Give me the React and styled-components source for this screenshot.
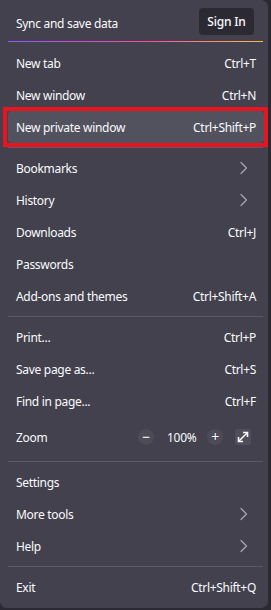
import React from "react";
import styled, { createGlobalStyle } from "styled-components";

const GlobalStyle = createGlobalStyle`
  html, body {
    margin: 0;
    padding: 0;
    background: #2b2a33;
  }
  body {
    font-family: "Noto Sans", "Open Sans", sans-serif;
    -webkit-font-smoothing: antialiased;
  }
`;

const SECTIONS = [
  [
    { label: "New tab", shortcut: "Ctrl+T" },
    { label: "New window", shortcut: "Ctrl+N" },
    { label: "New private window", shortcut: "Ctrl+Shift+P", marked: true },
  ],
  [
    { label: "Bookmarks", sub: true },
    { label: "History", sub: true },
    { label: "Downloads", shortcut: "Ctrl+J" },
    { label: "Passwords" },
    { label: "Add-ons and themes", shortcut: "Ctrl+Shift+A" },
  ],
  [
    { label: "Print...", shortcut: "Ctrl+P" },
    { label: "Save page as...", shortcut: "Ctrl+S" },
    { label: "Find in page...", shortcut: "Ctrl+F" },
    { zoom: true },
  ],
  [
    { label: "Settings" },
    { label: "More tools", sub: true },
    { label: "Help", sub: true },
  ],
  [{ label: "Exit", shortcut: "Ctrl+Shift+Q" }],
];

function Chevron() {
  return (
    <svg width="16" height="16" viewBox="0 0 16 16" fill="none">
      <path
        d="M5 2.5 L10.5 8 L5 13.5"
        stroke="#a9a9b1"
        strokeWidth="1.2"
        strokeLinecap="round"
        strokeLinejoin="round"
      />
    </svg>
  );
}

function ExpandIcon() {
  return (
    <svg width="12" height="12" viewBox="0 0 12 12" fill="none">
      <path d="M2 10 L10 2" stroke="#fbfbfe" strokeWidth="1.6" />
      <path d="M6 1.5 H10.5 V6" stroke="#fbfbfe" strokeWidth="1.6" />
      <path d="M1.5 6 V10.5 H6" stroke="#fbfbfe" strokeWidth="1.6" />
    </svg>
  );
}

function ZoomRow() {
  return (
    <ZoomItem>
      <Label>Zoom</Label>
      <ZoomControls>
        <RoundBtn>−</RoundBtn>
        <ZoomValue>100%</ZoomValue>
        <RoundBtn>+</RoundBtn>
        <SquareBtn>
          <ExpandIcon />
        </SquareBtn>
      </ZoomControls>
    </ZoomItem>
  );
}

export default function App() {
  return (
    <>
      <GlobalStyle />
      <Panel>
        <Header>
          <HeaderTitle>Sync and save data</HeaderTitle>
          <SignIn type="button">Sign In</SignIn>
        </Header>
        <GradientLine />
        {SECTIONS.map((items, i) => (
          <React.Fragment key={i}>
            {i > 0 && <Separator />}
            {items.map((item, j) =>
              item.zoom ? (
                <ZoomRow key={j} />
              ) : (
                <Item key={j} $marked={item.marked}>
                  <Label>{item.label}</Label>
                  {item.shortcut && <Shortcut>{item.shortcut}</Shortcut>}
                  {item.sub && (
                    <ChevronWrap>
                      <Chevron />
                    </ChevronWrap>
                  )}
                </Item>
              )
            )}
          </React.Fragment>
        ))}
      </Panel>
    </>
  );
}

const Panel = styled.div`
  width: 268px;
  height: 608px;
  box-sizing: border-box;
  background: #42414d;
  border-radius: 0 7px 7px 7px;
  padding: 8px 0 4px;
  display: flex;
  flex-direction: column;
  color: #fbfbfe;
  font-size: 12px;
  letter-spacing: -0.3px;
`;

const Header = styled.div`
  display: flex;
  align-items: center;
  justify-content: space-between;
  height: 27px;
  padding: 0 14px 0 16px;
`;

const HeaderTitle = styled.span`
  padding-top: 3px;
`;

const SignIn = styled.button`
  appearance: none;
  border: 0;
  width: 55px;
  height: 27px;
  border-radius: 4px;
  background: #2b2a33;
  color: #fbfbfe;
  font-family: inherit;
  font-size: 12px;
  font-weight: 500;
  letter-spacing: -0.2px;
  padding: 0;
`;

const GradientLine = styled.div`
  height: 1px;
  margin: 6px 5px 5px 8px;
  background: linear-gradient(90deg, #9059ff 0%, #ff4aa2 55%, #ffbd4f 100%);
`;

const Separator = styled.div`
  height: 1px;
  margin: 4px 5px 4px 8px;
  background: #5b5a65;
`;

const Item = styled.div`
  position: relative;
  display: flex;
  align-items: center;
  height: 32px;
  margin: 0 4px 0 8px;
  padding: 0 8px;
  border-radius: 4px;
  background: ${(p) => (p.$marked ? "#52525e" : "transparent")};

  ${(p) =>
    p.$marked &&
    `
    &::after {
      content: "";
      position: absolute;
      top: -4px;
      left: -5px;
      right: -4px;
      bottom: -4px;
      border: 4px solid #e8141f;
    }
  `}
`;

const ZoomItem = styled(Item)`
  height: 40px;
`;

const Label = styled.span`
  flex: 1;
  white-space: nowrap;
`;

const Shortcut = styled.span`
  white-space: nowrap;
`;

const ChevronWrap = styled.span`
  display: flex;
  margin-right: 4px;
`;

const ZoomControls = styled.div`
  display: flex;
  align-items: center;
  margin-right: 5px;
`;

const RoundBtn = styled.span`
  width: 16px;
  height: 16px;
  border-radius: 50%;
  background: #4c4b57;
  display: flex;
  align-items: center;
  justify-content: center;
  font-size: 14px;
  line-height: 1;
  color: #fbfbfe;
`;

const ZoomValue = styled.span`
  width: 29px;
  margin: 0 11px 0 13px;
  text-align: center;
`;

const SquareBtn = styled.span`
  width: 16px;
  height: 16px;
  margin-left: 12px;
  background: #4f4e5a;
  border-radius: 2px;
  display: flex;
  align-items: center;
  justify-content: center;
`;
